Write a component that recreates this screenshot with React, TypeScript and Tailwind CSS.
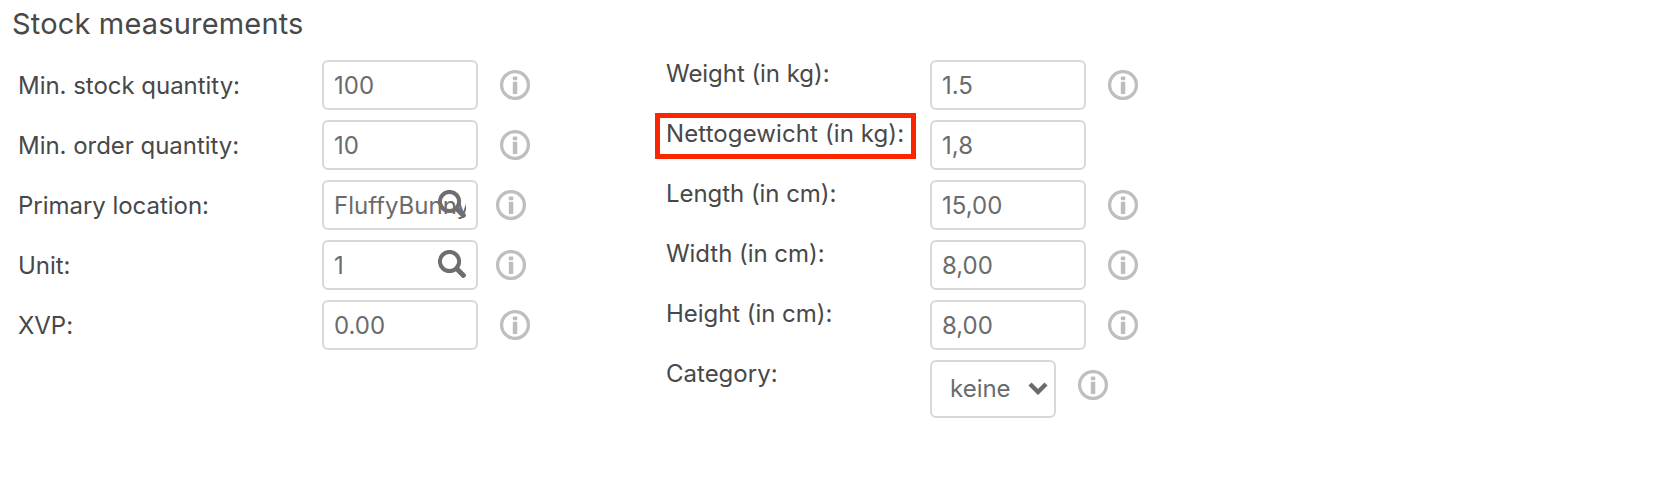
import React from 'react';
import clsx from 'clsx';

interface Field {
  label: string;
  value: string;
  info?: boolean;
  lookup?: boolean;
  highlight?: boolean;
}

const LEFT_FIELDS: Field[] = [
  { label: 'Min. stock quantity:', value: '100', info: true },
  { label: 'Min. order quantity:', value: '10', info: true },
  { label: 'Primary location:', value: 'FluffyBunny', info: true, lookup: true },
  { label: 'Unit:', value: '1', info: true, lookup: true },
  { label: 'XVP:', value: '0.00', info: true },
];

const RIGHT_FIELDS: Field[] = [
  { label: 'Weight (in kg):', value: '1.5', info: true },
  { label: 'Nettogewicht (in kg):', value: '1,8', highlight: true },
  { label: 'Length (in cm):', value: '15,00', info: true },
  { label: 'Width (in cm):', value: '8,00', info: true },
  { label: 'Height (in cm):', value: '8,00', info: true },
];

const InfoIcon = ({ className }: { className?: string }) => (
  <svg viewBox="0 0 30 30" className={clsx('w-[30px] h-[30px] shrink-0 blur-[0.7px]', className)}>
    <circle cx="15" cy="15" r="13.4" fill="none" stroke="#bebfbf" strokeWidth="3.3" />
    <rect x="12.8" y="6.6" width="4.5" height="3.6" rx="1" fill="#bcbdbd" />
    <rect x="12.8" y="11.8" width="4.5" height="12.2" rx="0.8" fill="#bcbdbd" />
  </svg>
);

const SearchIcon = () => (
  <svg viewBox="0 0 28 28" className="absolute left-[116px] top-[10px] w-7 h-7 blur-[0.6px]">
    <circle cx="11.5" cy="11.5" r="9.6" fill="none" stroke="#6e6e70" strokeWidth="4" />
    <path d="M18.5 18.5 L27 27" stroke="#6e6e70" strokeWidth="5" />
  </svg>
);

const TextField = ({ value, lookup }: { value: string; lookup?: boolean }) => (
  <div className="relative w-[156px] h-[50px] shrink-0">
    <input
      type="text"
      defaultValue={value}
      className="w-full h-full px-2.5 border-2 border-[#d8d8d8] rounded-md bg-white text-2xl text-[#6b6b6c] outline-none"
    />
    {lookup && <SearchIcon />}
  </div>
);

const App: React.FC = () => (
  <div
    className="w-full h-[492px] bg-white text-[#484849] overflow-hidden"
    style={{ fontFamily: 'Inter, sans-serif' }}
  >
    <h2 className="h-[60px] pl-3 pt-1 text-[29px] leading-10 tracking-[0.17px]">Stock measurements</h2>

    <div className="flex">
      {/* Quantities and location */}
      <div className="w-[666px] pl-[18px] flex flex-col gap-2.5">
        {LEFT_FIELDS.map((f) => (
          <div key={f.label} className="flex items-center">
            <label className="w-[304px] pt-0.5 text-2xl tracking-[-0.03px]">{f.label}</label>
            <TextField value={f.value} lookup={f.lookup} />
            <InfoIcon className={f.lookup ? 'ml-[18px]' : 'ml-[22px]'} />
          </div>
        ))}
      </div>

      {/* Dimensions */}
      <div className="flex flex-col gap-2.5">
        {RIGHT_FIELDS.map((f) => (
          <div key={f.label} className="flex h-[50px]">
            <div className="w-[264px] shrink-0">
              <label
                className={clsx(
                  'block text-2xl leading-[27px] whitespace-nowrap',
                  f.highlight
                    ? 'w-[261px] h-[46px] -ml-[11px] -mt-[7px] pl-[6px] pt-[2px] border-5 border-[#fb2600] tracking-[0.1px]'
                    : 'tracking-[-0.05px]'
                )}
              >
                {f.label}
              </label>
            </div>
            <TextField value={f.value} />
            {f.info && <InfoIcon className="ml-[22px] mt-2.5" />}
          </div>
        ))}
        <div className="flex">
          <label className="w-[264px] text-2xl leading-[27px]">Category:</label>
          <div className="relative w-[126px] h-[58px]">
            <select className="w-full h-full pl-[18px] appearance-none border-2 border-[#d8d8d8] rounded-md bg-white text-2xl text-[#6b6b6c]">
              <option>keine</option>
            </select>
            <svg viewBox="0 0 20 14" className="absolute left-[98px] top-[21px] w-5 h-3.5 pointer-events-none">
              <path d="M2 3 L10 11 L18 3" fill="none" stroke="#6b6b6c" strokeWidth="4.4" />
            </svg>
          </div>
          <InfoIcon className="ml-[22px] mt-2.5" />
        </div>
      </div>
    </div>
  </div>
);

export default App;
